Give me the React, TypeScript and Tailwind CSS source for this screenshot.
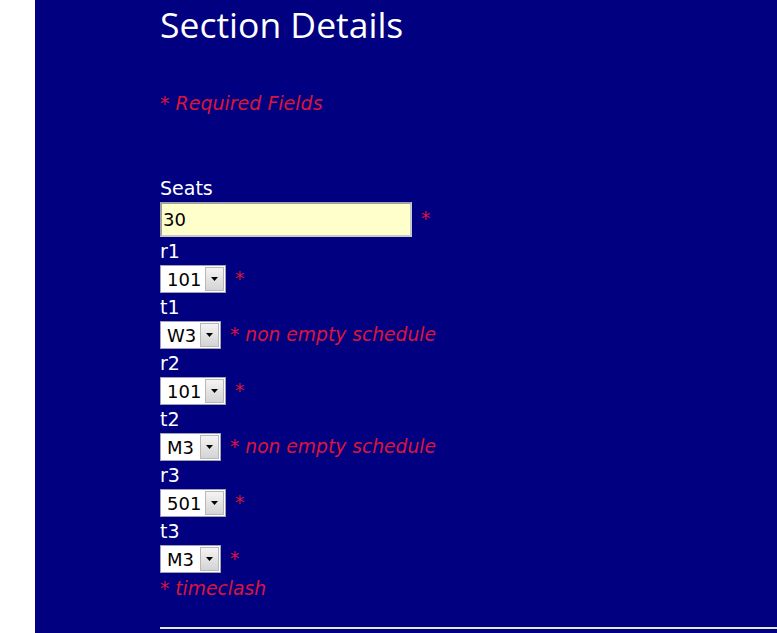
import React from "react";

const body = { fontFamily: '"DejaVu Sans", Verdana, sans-serif' };

function Select({ value, width }: { value: string; width: string }) {
  return (
    <div className={`flex h-[28px] ${width} border border-[#a0a0b8] bg-white`}>
      <div className="flex flex-1 items-center pl-[6px] text-[18px] text-black" style={body}>
        {value}
      </div>
      <div className="m-[1px] flex w-[19px] items-center justify-center border border-[#b8b8b8] bg-gradient-to-b from-[#f4f4f4] to-[#d4d4d4]">
        <svg width="7" height="4" viewBox="0 0 7 4">
          <path d="M0 0H7L3.5 4Z" fill="#000" />
        </svg>
      </div>
    </div>
  );
}

function Label({ children }: { children: React.ReactNode }) {
  return (
    <div className="h-[27px] text-[19px] leading-[27px] text-white" style={body}>
      {children}
    </div>
  );
}

function Field({
  label,
  value,
  width,
  note,
}: {
  label: string;
  value: string;
  width: string;
  note?: string;
}) {
  return (
    <div>
      <Label>{label}</Label>
      <div className="mb-[1px] flex items-center gap-[9px]">
        <Select value={value} width={width} />
        <span className="text-[18.7px] italic text-[#dc143c]" style={body}>
          * {note ?? ""}
        </span>
      </div>
    </div>
  );
}

export default function App() {
  return (
    <div className="min-h-[633px] bg-white pl-[35px]">
      <div className="min-h-[633px] overflow-hidden bg-[#000080] pl-[125px]">
        <h1
          className="text-[35.5px] leading-[48px] text-white"
          style={{ fontFamily: '"Open Sans", sans-serif' }}
        >
          Section Details
        </h1>
        <div
          className="mt-[43px] text-[19px] italic leading-[24px] text-[#dc143c]"
          style={body}
        >
          * Required Fields
        </div>
        <div className="mt-[60px]">
          <Label>Seats</Label>
          <div className="mb-[1px] flex items-center gap-[9px]">
            <div
              className="flex h-[35px] w-[252px] items-center border-2 border-[#c8c8c8] border-t-[#a0a0a0] border-l-[#a0a0a0] bg-[#ffffcc] pl-[1px] text-[18px] text-black"
              style={body}
            >
              30
            </div>
            <span className="text-[18.7px] text-[#dc143c]" style={body}>
              *
            </span>
          </div>
        </div>
        <Field label="r1" value="101" width="w-[66px]" />
        <Field label="t1" value="W3" width="w-[61px]" note="non empty schedule" />
        <Field label="r2" value="101" width="w-[66px]" />
        <Field label="t2" value="M3" width="w-[61px]" note="non empty schedule" />
        <Field label="r3" value="501" width="w-[66px]" />
        <Field label="t3" value="M3" width="w-[61px]" />
        <div className="mt-[1px] text-[18.7px] italic leading-[30px] text-[#dc143c]" style={body}>
          * timeclash
        </div>
        <div className="mt-[23px] h-[2px] bg-[#e4e4e4]" />
      </div>
    </div>
  );
}
